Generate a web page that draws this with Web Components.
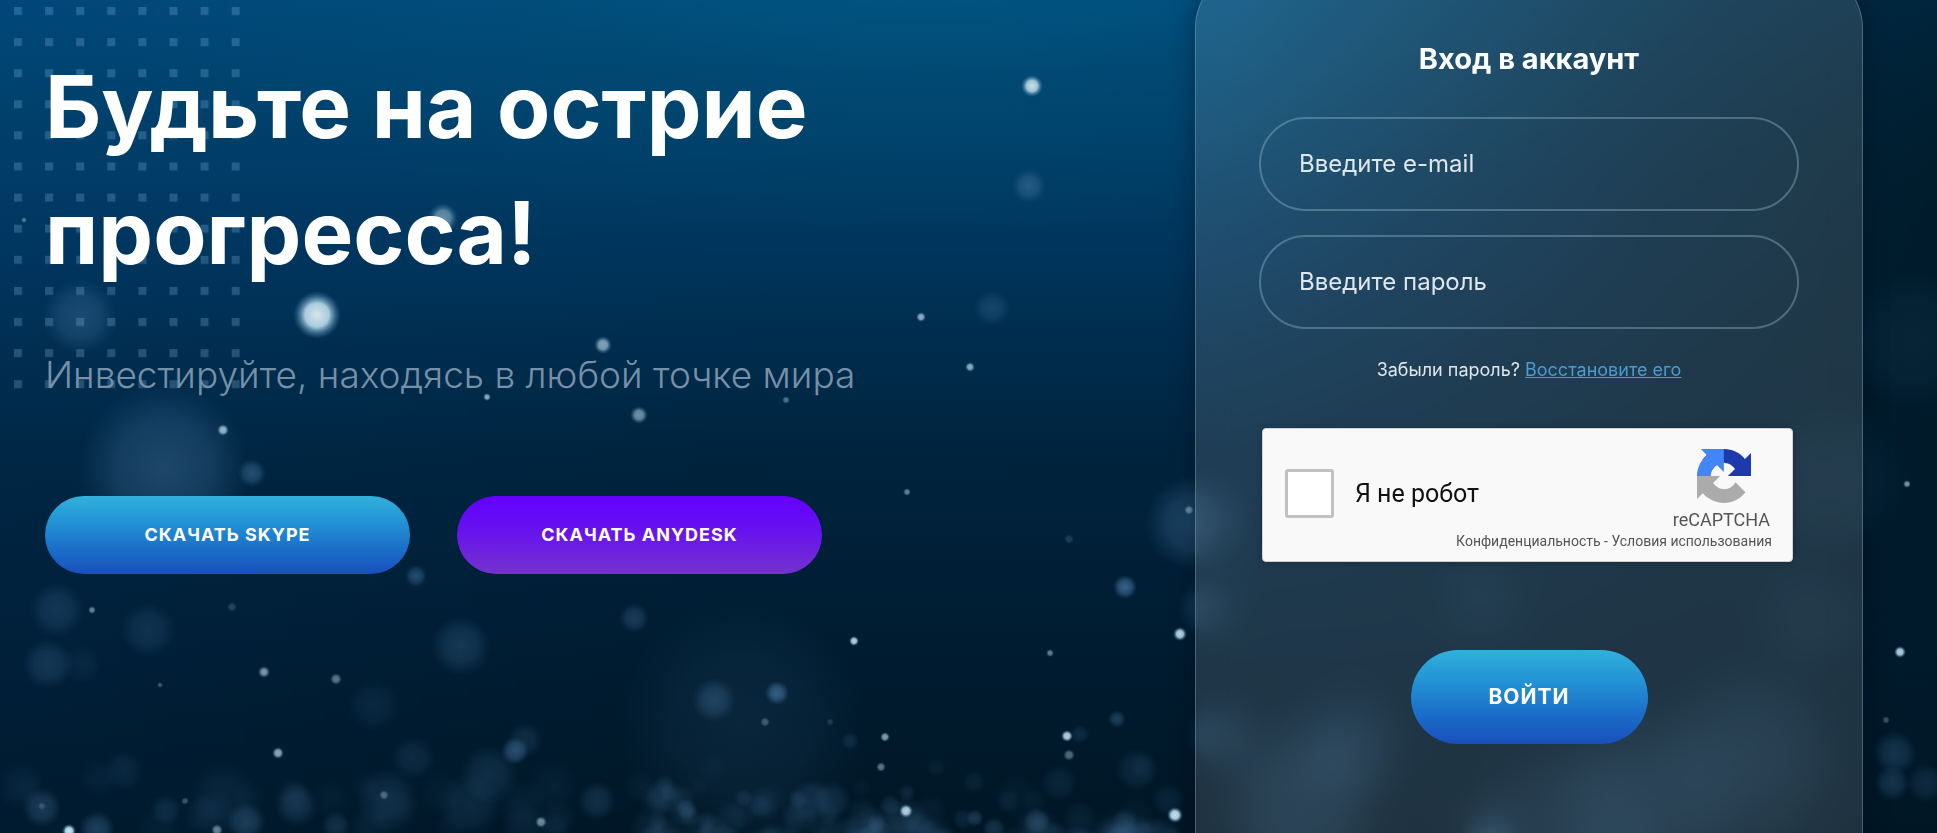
<!DOCTYPE html>
<html lang="ru">
<head>
<meta charset="utf-8">
<meta name="viewport" content="width=device-width, initial-scale=1">
<title>Вход в аккаунт</title>
<style>
  html, body { margin: 0; height: 100%; background: #001a2e; }
  body { font-family: Inter, "Liberation Sans", sans-serif; color: #fff; overflow: hidden; }
</style>
</head>
<body>
<landing-page></landing-page>

<template id="tpl-page">
  <style>
    :host { display: block; position: relative; min-height: 100vh; height: 100vh; overflow: hidden; isolation: isolate; }
    bokeh-sky, dot-grid { position: absolute; z-index: -1; }
    bokeh-sky { inset: 0; }
    dot-grid { top: 7px; left: 14px; }
    main { display: grid; grid-template-columns: minmax(0, 1fr) minmax(0, 668px); padding: 0 74px 0 45px; gap: 40px; }
  </style>
  <bokeh-sky></bokeh-sky>
  <dot-grid></dot-grid>
  <main>
    <hero-copy>
      <span slot="title">Будьте на острие<br>прогресса!</span>
      <span slot="lead">Инвестируйте, находясь в любой точке мира</span>
      <pill-button slot="actions">Скачать Skype</pill-button>
      <pill-button slot="actions" tone="violet">Скачать AnyDesk</pill-button>
    </hero-copy>
    <login-card></login-card>
  </main>
</template>

<template id="tpl-hero">
  <style>
    :host { display: block; padding-top: 44px; }
    h1 { margin: 0; font-size: 87px; line-height: 126px; font-weight: 700; white-space: nowrap; }
    p { margin: 55px 0 0; font-size: 37px; line-height: 48px; font-weight: 300; color: #7590a8; white-space: nowrap; }
    div { display: flex; gap: 47px; margin-top: 97px; }
    ::slotted(pill-button) { width: 365px; height: 78px; }
  </style>
  <h1><slot name="title"></slot></h1>
  <p><slot name="lead"></slot></p>
  <div><slot name="actions"></slot></div>
</template>

<template id="tpl-pill">
  <style>
    :host { display: block; font-size: 18px; }
    button { width: 100%; height: 100%; padding: 0 0 2px; border: 0; border-radius: 47px; color: #fff; font: inherit; font-weight: 700; letter-spacing: 1px; text-transform: uppercase; cursor: pointer; background: linear-gradient(#31b0dc, #2496d6 30%, #1b6cc8 70%, #1850bb); }
    :host([tone="violet"]) button { background: linear-gradient(#6400ff, #6610f0 40%, #7432ce); }
  </style>
  <button type="button"><slot></slot></button>
</template>

<template id="tpl-card">
  <style>
    :host { display: block; box-sizing: border-box; min-height: calc(100vh + 100px); margin-top: -32px; padding: 72px 63px 0; border: 1px solid rgba(160, 200, 220, .32); border-radius: 60px; background: rgba(255, 255, 255, .12); backdrop-filter: blur(18px); box-shadow: 0 0 24px rgba(0, 10, 25, .4); }
    form { display: flex; flex-direction: column; }
    h2 { margin: 0 0 40px; font-size: 29px; line-height: 36px; font-weight: 700; text-align: center; }
    text-field + text-field { margin-top: 24px; }
    p { margin: 28px 0 0; font-size: 18px; line-height: 26px; text-align: center; color: #dfe6ec; }
    a { color: #4a9bd0; }
    robot-check { margin: 45px 6px 0 3px; }
    pill-button { align-self: center; width: 237px; height: 94px; margin-top: 88px; font-size: 21px; }
  </style>
  <form>
    <h2>Вход в аккаунт</h2>
    <text-field kind="email" label="Введите e-mail"></text-field>
    <text-field kind="password" label="Введите пароль"></text-field>
    <p>Забыли пароль? <a href="#restore">Восстановите его</a></p>
    <robot-check></robot-check>
    <pill-button>Войти</pill-button>
  </form>
</template>

<template id="tpl-field">
  <style>
    :host { display: block; }
    input { display: block; box-sizing: border-box; width: 100%; height: 94px; padding: 0 38px 2px; border: 2px solid rgba(150, 185, 205, .4); border-radius: 47px; background: transparent; color: #dfe6ec; font: inherit; font-size: 24px; outline: 0; }
    input::placeholder { color: #dfe6ec; opacity: 1; }
  </style>
  <input>
</template>

<template id="tpl-robot">
  <style>
    :host { display: flex; box-sizing: border-box; height: 134px; padding: 0 21px 0 22px; border-radius: 4px; background: #f9f9f9; border: 1px solid #d3d3d3; color: #111; font-family: Roboto, "Liberation Sans", sans-serif; box-shadow: 0 0 6px rgba(0,0,0,.25); position: relative; }
    label { display: flex; align-items: center; gap: 21px; font-size: 25px; white-space: nowrap; padding-bottom: 4px; }
    input { appearance: none; margin: 0; width: 49px; height: 49px; box-sizing: border-box; border: 3px solid #c1c1c1; border-radius: 3px; background: #fff; }
    .brand { display: flex; flex-direction: column; align-items: flex-end; margin-left: auto; padding-top: 20px; color: #555; }
    svg { width: 54px; height: 54px; margin-right: 20px; }
    .name { font-size: 18px; line-height: 22px; margin-top: 6px; margin-right: 1px; }
    .terms { position: absolute; right: 20px; bottom: 12px; font-size: 14px; line-height: 16px; white-space: nowrap; color: #555; }
    a { color: inherit; text-decoration: none; }
  </style>
  <label><input type="checkbox"><span>Я не робот</span></label>
  <div class="brand">
    <svg viewBox="0 0 64 64" aria-hidden="true">
      <path fill="#1c3aa9" d="M64 31.955l-.033-1.37V4.687l-7.16 7.16C50.948 4.674 42.033.093 32.05.093c-10.4 0-19.622 4.96-25.458 12.64l11.736 11.86a15.55 15.55 0 0 1 4.754-5.334c2.05-1.6 4.952-2.906 8.968-2.906.485 0 .86.057 1.135.163 4.976.393 9.288 3.14 11.828 7.124l-8.307 8.307L64 31.953"/>
      <path fill="#4285f4" d="M31.862.094l-1.37.033H4.594l7.16 7.16C4.58 13.147 0 22.06 0 32.046c0 10.4 4.96 19.622 12.64 25.458L24.5 45.768a15.55 15.55 0 0 1-5.334-4.754c-1.6-2.05-2.906-4.952-2.906-8.968 0-.485.057-.86.163-1.135.393-4.976 3.14-9.288 7.124-11.828l8.307 8.307L31.86.095"/>
      <path fill="#ababab" d="M.001 32.045l.033 1.37v25.898l7.16-7.16c5.86 7.173 14.774 11.754 24.757 11.754 10.4 0 19.622-4.96 25.458-12.64l-11.736-11.86a15.55 15.55 0 0 1-4.754 5.334c-2.05 1.6-4.952 2.906-8.968 2.906-.485 0-.86-.057-1.135-.163-4.976-.393-9.288-3.14-11.828-7.124l8.307-8.307c-10.522.04-22.4.066-27.295-.005"/>
    </svg>
    <span class="name">reCAPTCHA</span>
  </div>
  <span class="terms"><a href="#privacy">Конфиденциальность</a> - <a href="#terms">Условия использования</a></span>
</template>

<template id="tpl-dots">
  <style>:host { display: block; } svg { display: block; width: 226px; height: 382px; }</style>
  <svg viewBox="0 0 226 382" aria-hidden="true">
    <defs><pattern id="d" width="31.1" height="31.1" patternUnits="userSpaceOnUse"><rect width="8" height="8" fill="#7fb4dc" fill-opacity=".28"/></pattern></defs>
    <rect width="226" height="382" fill="url(#d)"/>
  </svg>
</template>

<template id="tpl-sky">
  <style>
    :host { display: block; background:
      radial-gradient(ellipse 46% 90% at 108% 28%, rgba(0, 22, 32, .95), rgba(0, 22, 36, .6) 50%, rgba(0, 22, 36, 0)),
      radial-gradient(ellipse 46% 36% at 48% -8%, rgba(3, 96, 140, .6), rgba(3, 84, 124, .3) 50%, rgba(2, 80, 120, 0)),
      linear-gradient(100deg, rgba(0, 60, 120, .14), rgba(0, 30, 50, 0) 40%),
      linear-gradient(#004a79, #004069 15%, #00355c 30%, #002c4c 42%, #00243e 54%, #001f36 68%, #001a2d 84%, #001625); }
    svg { display: block; width: 100%; height: 100%; }
  </style>
  <svg viewBox="0 0 1937 833" preserveAspectRatio="xMidYMid slice" aria-hidden="true">
    <defs>
      <radialGradient id="bright"><stop offset="0" stop-color="#d4e6ec"/><stop offset=".5" stop-color="#a9cbdd"/><stop offset="1" stop-color="#3f7aa3" stop-opacity="0"/></radialGradient>
      <radialGradient id="soft"><stop offset="0" stop-color="#4a78a2"/><stop offset=".55" stop-color="#42709a" stop-opacity=".75"/><stop offset="1" stop-color="#36628c" stop-opacity="0"/></radialGradient>
    </defs>
  </svg>
</template>

<script>
  const define = (name, id, setup) => customElements.define(name, class extends HTMLElement {
    constructor() {
      super();
      this.attachShadow({ mode: 'open' }).append(document.getElementById(id).content.cloneNode(true));
    }
    connectedCallback() { if (setup) setup.call(this, this.shadowRoot); }
  });

  // Sharp sparks: x, y, radius, opacity
  const sparks = [
    [317,315,24,1],[443,218,15,.5],[603,345,9,.65],[921,317,5,.7],[639,415,9,.55],[487,397,4,.7],[786,400,4,.4],[970,367,5,.7],
    [1032,86,11,.95],[223,430,6,.75],[92,610,4,.5],[854,641,5,.9],[907,492,4,.5],[264,672,6,.6],[336,679,6,.45],[160,685,3,.3],
    [885,737,5,.65],[881,767,5,.45],[765,722,5,.3],[278,753,6,.7],[384,795,5,.35],[69,831,7,1],[217,830,6,.5],[541,822,6,.55],
    [906,811,7,.9],[1180,634,7,.95],[1050,653,4,.5],[1067,736,6,.9],[1069,755,6,.4],[1175,815,8,1],[1189,510,5,.5],
    [1907,484,4,.6],[1900,652,6,.9],[1886,720,4,.3],[1069,539,5,.15],[185,801,4,.3],[830,722,4,.15],[24,220,3,.4],[232,607,5,.2],[42,806,4,.2]
  ];
  // Out-of-focus discs: x, y, radius, opacity
  const discs = [
    [80,317,38,.38],[164,468,86,.4],[252,473,14,.5],[416,576,11,.5],[57,610,28,.26],[148,630,28,.22],[48,664,26,.28],[82,664,20,.1],[461,646,30,.3],
    [634,618,15,.35],[374,706,26,.13],[714,700,22,.38],[777,693,12,.7],[742,725,125,.13],[515,751,14,.55],[525,740,18,.2],[413,758,22,.18],
    [124,771,20,.14],[223,795,34,.12],[387,798,32,.2],[489,775,30,.22],[470,805,32,.18],[42,842,4,.1],[42,808,20,.35],[597,801,20,.25],[297,806,22,.22],
    [246,822,20,.38],[166,810,16,.2],[97,829,18,.4],[336,826,15,.25],[1029,186,17,.5],[992,308,18,.3],[1125,587,12,.75],
    [1117,719,9,.4],[1193,523,48,.4],[1207,608,30,.3],[1080,734,10,.2],[1137,770,22,.18],[1895,753,22,.3],[1892,783,18,.3],[1926,783,20,.2],
    [1914,340,70,.1],[1300,800,90,.24],[1350,745,60,.2],[1220,735,34,.3],[1490,835,30,.4],[1750,760,100,.18],[1650,800,100,.18],
    [1570,850,120,.18],[1830,480,80,.1],[1480,600,50,.1],[1810,620,60,.08],
    [665,797,20,.24],[686,809,11,.3],[744,798,10,.2],[798,799,10,.2],[832,801,20,.22],[850,741,9,.2],[890,805,11,.22],[877,823,10,.3],
    [975,818,9,.35],[994,829,12,.3],[1037,821,14,.32],[936,768,10,.1],[1125,822,14,.24]
  ];
  // Fine haze of small discs along the lower edge, repeatable from one load to the next
  let seed = 7;
  const rnd = () => (seed = (seed * 16807) % 2147483647) / 2147483647;
  for (let i = 0; i < 110; i++) {
    const y = 765 + Math.sqrt(rnd()) * 80;
    discs.push([Math.round(640 + rnd() * 545), Math.round(y), 9 + Math.round(rnd() * 14), .05 + rnd() * .13]);
  }
  for (let i = 0; i < 20; i++) discs.push([Math.round(rnd() * 640), Math.round(775 + rnd() * 65), 12 + Math.round(rnd() * 16), .04 + rnd() * .07]);

  define('bokeh-sky', 'tpl-sky', root => {
    const svg = root.querySelector('svg');
    const draw = (list, fill) => list.forEach(([x, y, r, o]) => {
      const c = document.createElementNS('http://www.w3.org/2000/svg', 'circle');
      for (const [k, v] of Object.entries({ cx: x, cy: y, r, fill: `url(#${fill})`, opacity: o })) c.setAttribute(k, v);
      svg.append(c);
    });
    draw(discs, 'soft');
    draw(sparks, 'bright');
  });
  define('dot-grid', 'tpl-dots');
  define('pill-button', 'tpl-pill');
  define('text-field', 'tpl-field', function (root) {
    const input = root.querySelector('input');
    input.type = this.getAttribute('kind');
    input.placeholder = this.getAttribute('label');
    input.setAttribute('aria-label', this.getAttribute('label'));
  });
  define('robot-check', 'tpl-robot');
  define('login-card', 'tpl-card');
  define('hero-copy', 'tpl-hero');
  define('landing-page', 'tpl-page');
</script>
</body>
</html>
